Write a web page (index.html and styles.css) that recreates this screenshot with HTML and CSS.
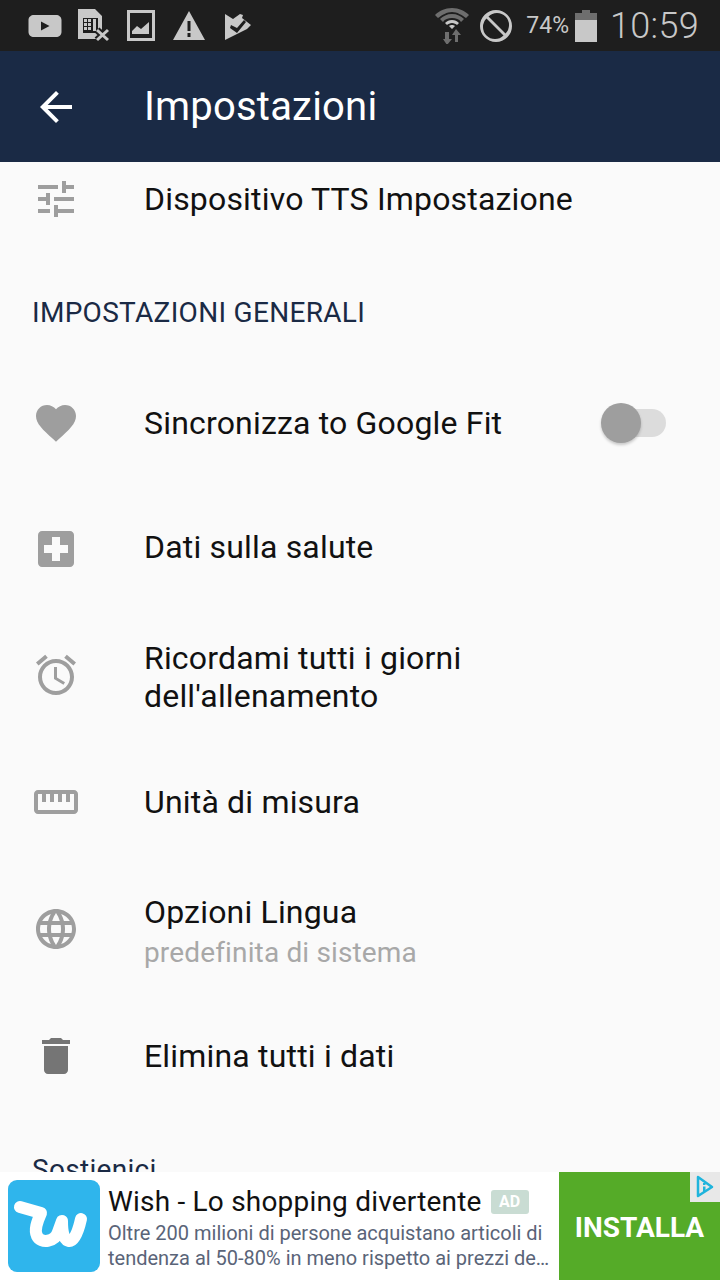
FILE: index.html
```html
<!DOCTYPE html>
<html lang="it">
<head>
    <meta charset="UTF-8">
    <meta name="viewport" content="width=device-width, initial-scale=1.0">
    <title>Impostazioni</title>
    <link rel="stylesheet" href="styles.css">
</head>
<body>
    <div class="screen">
        <div class="statusbar">
            <div class="status-left">
                <svg class="st-youtube" viewBox="0 0 34 24"><path fill-rule="evenodd" d="M6 1h22c3 0 5.500 2 5.500 5v12c0 3-2.500 5-5.500 5H6c-3 0-5.500-2-5.500-5V6C.5 3 3 1 6 1zm7 6.500v9l8.500-4.500z"/></svg>
                <svg class="st-sim" viewBox="0 0 32 33"><path fill-rule="evenodd" d="M0 0h17l7 7v23H0zM5 9v15h15V9z"/><path d="M6 10h3v3H6zm4 0h3v3h-3zm5 0h3v12h-3zM6 14h3v3H6zm4 0h3v3h-3zM6 18h3v3H6zm4 0h3v3h-3z"/><path class="cut" d="M19 21l11 10M30 21L19 31"/><path class="cross" d="M19 21l11 10M30 21L19 31"/></svg>
                <svg class="st-image" viewBox="0 0 28 31"><path fill-rule="evenodd" d="M0 0h28v31H0zM3 3v25h22V3z"/><path d="M5 24v-3l5-5 4 3 8-7v12z"/></svg>
                <svg class="st-warning" viewBox="0 0 32 30"><path fill-rule="evenodd" d="M16 0l16 29H0zM14.500 10v10h3V10zm0 12v4h3v-4z"/></svg>
                <svg class="st-check" viewBox="0 0 27 28"><path fill-rule="evenodd" d="M0 2l8 5 7-5 3 1-1 3 9 7-4 4-22 11zM6 13l-1 3 7 5 9-11-2-2-7 8z"/></svg>
            </div>
            <div class="status-right">
                <svg class="st-wifi" viewBox="0 0 34 36"><path class="dim" d="M17 0C10 0 4 3 0 7l3 3c4-3 9-6 14-6s10 3 14 6l3-3C30 3 24 0 17 0z"/><path class="dim" d="M17 6c-5 0-9 2-12 5l3 3c2-3 5-4 9-4s7 1 9 4l3-3c-3-3-7-5-12-5z"/><path d="M17 12c-3 0-5 1-7 3l2 2c1-1 3-2 5-2s4 1 5 2l2-2c-2-2-4-3-7-3zm0 5c-1 0-2 0-3 1l3 3 3-3c-1-1-2-1-3-1z"/><path class="dim" d="M10 24h4v7h3l-5 6-4-6h2zM21 21l5 6h-3v7h-3v-7h-3z"/></svg>
                <svg class="st-ban" viewBox="0 0 32 32"><path fill-rule="evenodd" d="M16 0a16 16 0 1 1 0 32a16 16 0 0 1 0-32zM6.500 8.500a12 12 0 0 0 17 17zM8.500 6.500l17 17a12 12 0 0 0-17-17z"/></svg>
                <span class="status-pct">74%</span>
                <svg class="st-battery" viewBox="0 0 22 32"><path class="dim" d="M7 0h8v3h7v7H0V3h7z"/><path d="M0 10h22v22H0z"/></svg>
                <span class="status-time">10:59</span>
            </div>
        </div>

        <header class="appbar">
            <svg class="back" viewBox="0 0 24 24"><path d="M20 11H7.830l5.590-5.590L12 4l-8 8 8 8 1.410-1.410L7.830 13H20v-2z"/></svg>
            <h1>Impostazioni</h1>
        </header>

        <main class="content">
            <div class="list">
                <div class="row">
                    <svg class="icon" viewBox="0 0 24 24"><path d="M3 17v2h6v-2H3zM3 5v2h10V5H3zm10 16v-2h8v-2h-8v-2h-2v6h2zM7 9v2H3v2h4v2h2V9H7zm14 4v-2H11v2h10zm-6-4h2V7h4V5h-4V3h-2v6z"/></svg>
                    <div class="row-text">Dispositivo TTS Impostazione</div>
                </div>

                <div class="section">IMPOSTAZIONI GENERALI</div>

                <div class="row">
                    <svg class="icon" viewBox="0 0 24 24"><path d="M12 21.350l-1.450-1.320C5.400 15.360 2 12.280 2 8.500 2 5.420 4.420 3 7.500 3c1.740 0 3.410.81 4.500 2.090C13.090 3.810 14.760 3 16.500 3 19.580 3 22 5.420 22 8.500c0 3.780-3.400 6.860-8.550 11.540L12 21.350z"/></svg>
                    <div class="row-text">Sincronizza to Google Fit</div>
                    <div class="switch"><div class="switch-thumb"></div></div>
                </div>
                <div class="row">
                    <svg class="icon icon-low" viewBox="0 0 24 24"><path d="M19 3H5c-1.100 0-1.990.9-1.990 2L3 19c0 1.100.9 2 2 2h14c1.100 0 2-.9 2-2V5c0-1.100-.9-2-2-2zm-1 11h-4v4h-4v-4H6v-4h4V6h4v4h4v4z"/></svg>
                    <div class="row-text">Dati sulla salute</div>
                </div>
                <div class="row row-tall">
                    <svg class="icon" viewBox="0 0 24 24"><path d="M22 5.720l-4.600-3.860-1.290 1.530 4.600 3.860L22 5.720zM7.880 3.390L6.600 1.860 2 5.710l1.290 1.530 4.590-3.850zM12.500 8H11v6l4.750 2.850.75-1.230-4-2.370V8zM12 4c-4.970 0-9 4.030-9 9s4.030 9 9 9 9-4.030 9-9-4.030-9-9-9zm0 16c-3.870 0-7-3.130-7-7s3.130-7 7-7 7 3.130 7 7-3.130 7-7 7z"/></svg>
                    <div class="row-text">Ricordami tutti i giorni<br>dell'allenamento</div>
                </div>
                <div class="row">
                    <svg class="icon" viewBox="0 0 24 24"><path d="M21 6H3c-1.100 0-2 .9-2 2v8c0 1.100.9 2 2 2h18c1.100 0 2-.9 2-2V8c0-1.100-.9-2-2-2zm0 10H3V8h2v4h2V8h2v4h2V8h2v4h2V8h2v4h2V8h2v8z"/></svg>
                    <div class="row-text">Unità di misura</div>
                </div>
                <div class="row row-lang">
                    <svg class="icon" viewBox="0 0 24 24"><path d="M11.990 2C6.470 2 2 6.480 2 12s4.470 10 9.990 10C17.520 22 22 17.520 22 12S17.520 2 11.990 2zm6.930 6h-2.950c-.32-1.250-.78-2.450-1.380-3.560 1.840.63 3.370 1.910 4.330 3.560zM12 4.040c.83 1.200 1.480 2.530 1.910 3.960h-3.820c.43-1.430 1.080-2.760 1.910-3.960zM4.260 14C4.100 13.360 4 12.690 4 12s.1-1.360.26-2h3.380c-.08.66-.14 1.320-.14 2 0 .68.06 1.340.14 2H4.260zm.82 2h2.950c.32 1.250.78 2.450 1.380 3.560-1.840-.63-3.370-1.900-4.330-3.560zm2.950-8H5.080c.96-1.660 2.490-2.930 4.330-3.560C8.810 5.550 8.350 6.750 8.030 8zM12 19.960c-.83-1.200-1.480-2.530-1.910-3.960h3.820c-.43 1.430-1.080 2.760-1.910 3.960zM14.340 14H9.660c-.09-.66-.16-1.320-.16-2 0-.68.07-1.350.16-2h4.680c.09.65.16 1.320.16 2 0 .68-.07 1.340-.16 2zm.25 5.560c.6-1.110 1.060-2.310 1.380-3.560h2.950c-.96 1.650-2.490 2.930-4.330 3.560zM16.360 14c.08-.66.14-1.320.14-2 0-.68-.06-1.340-.14-2h3.380c.16.64.26 1.310.26 2s-.1 1.360-.26 2h-3.380z"/></svg>
                    <div class="row-text">Opzioni Lingua<div class="row-sub">predefinita di sistema</div></div>
                </div>
                <div class="row">
                    <svg class="icon icon-dark" viewBox="0 0 24 24"><path d="M6 19c0 1.100.9 2 2 2h8c1.100 0 2-.9 2-2V7H6v12zM19 4h-3.500l-1-1h-5l-1 1H5v2h14V4z"/></svg>
                    <div class="row-text">Elimina tutti i dati</div>
                </div>

                <div class="section section-plain">Sostienici</div>
            </div>
        </main>

        <footer class="ad">
            <svg class="ad-logo" viewBox="0 0 92 92"><rect width="92" height="92" rx="9" fill="#2fb5ec"/><path d="M12 27L33 33C29 42 26 50 29 56C33 64 47 62 50 52L54 41C54 50 55 60 61 61C67 62 71 48 73 39" fill="none" stroke="#fff" stroke-width="12" stroke-linecap="round" stroke-linejoin="round"/></svg>
            <div class="ad-body">
                <div class="ad-title">Wish - Lo shopping divertente<span class="ad-badge">AD</span></div>
                <div class="ad-line">Oltre 200 milioni di persone acquistano articoli di</div>
                <div class="ad-line">tendenza al 50-80% in meno rispetto ai prezzi de…</div>
            </div>
            <div class="ad-cta">INSTALLA</div>
            <div class="adchoice">
                <svg viewBox="0 0 20 24"><path d="M3 2l14 10L3 21z" fill="none" stroke="#1fb4dc" stroke-width="2.500" stroke-linejoin="round"/><path d="M8 8h2.500v2H8zm0 3.500h2.500V17H8z" fill="#1fb4dc"/></svg>
            </div>
        </footer>
    </div>
</body>
</html>
```

FILE: styles.css
```css
:root {
    --bar: #1e1e1e;
    --status: #c8c8c8;
    --status-dim: #6e6e6e;
    --primary: #1a2a45;
    --background: #fafafa;
    --icon: #9e9e9e;
    --text: #111111;
}

html, body {
    margin: 0;
    height: 100%;
    overflow: hidden;
}

body {
    font-family: Roboto, sans-serif;
    color: var(--text);
    background: var(--background);
}

.screen {
    display: flex;
    flex-direction: column;
    height: 1280px;
}

/* status bar */
.statusbar {
    height: 51px;
    flex: none;
    background: var(--bar);
    display: flex;
    justify-content: space-between;
    align-items: center;
    padding: 0 21px 0 28px;
    color: var(--status);
}

.statusbar svg {
    display: block;
    fill: var(--status);
}

.statusbar .dim {
    fill: var(--status-dim);
}

.statusbar .cut {
    fill: none;
    stroke: var(--bar);
    stroke-width: 7;
}

.statusbar .cross {
    fill: none;
    stroke: var(--status);
    stroke-width: 3;
}

.status-left, .status-right {
    display: flex;
    align-items: center;
}

.st-youtube { width: 34px; height: 24px; margin-right: 16px; }
.st-sim { width: 32px; height: 33px; margin-right: 17px; }
.st-image { width: 28px; height: 31px; margin-right: 18px; }
.st-warning { width: 32px; height: 30px; margin-right: 20px; }
.st-check { width: 27px; height: 28px; }
.st-wifi { width: 34px; height: 36px; margin-right: 11px; }
.st-ban { width: 32px; height: 32px; margin-right: 14px; }
.st-battery { width: 22px; height: 32px; margin-left: 6px; margin-right: 13px; }

.status-pct {
    font-size: 23px;
}

.status-time {
    font-size: 36px;
    font-weight: 300;
    letter-spacing: 0.3px;
}

/* app bar */
.appbar {
    height: 111px;
    flex: none;
    background: var(--primary);
    display: flex;
    align-items: center;
    padding-left: 32px;
}

.back {
    width: 48px;
    height: 48px;
    fill: #ffffff;
    margin-right: 64px;
}

.appbar h1 {
    margin: 0;
    color: #ffffff;
    font-size: 40px;
    font-weight: 400;
    letter-spacing: 0.2px;
}

/* settings list */
.content {
    flex: 1;
    min-height: 0;
    overflow: hidden;
}

.list {
    margin-top: -25px;
}

.row {
    height: 124px;
    display: flex;
    align-items: center;
    padding: 0 54px 0 32px;
}

.row-tall {
    height: 131px;
}

.row-lang {
    height: 130px;
}

.icon {
    width: 48px;
    height: 48px;
    flex: none;
    fill: var(--icon);
    margin-right: 64px;
}

.icon-low {
    margin-top: 4px;
}

.icon-dark {
    fill: #757575;
}

.row-text {
    flex: 1;
    font-size: 32px;
    line-height: 38px;
    letter-spacing: 0.18px;
}

.row-tall .row-text {
    padding-top: 5px;
}

.row-lang .row-text {
    padding-top: 9px;
}

.row-sub {
    font-size: 28px;
    line-height: 44px;
    letter-spacing: 0.15px;
    color: #a8a8a8;
}

.section {
    height: 100px;
    display: flex;
    align-items: center;
    padding: 2px 0 0 32px;
    box-sizing: border-box;
    font-size: 28px;
    letter-spacing: 0.3px;
    color: var(--primary);
}

.switch {
    position: relative;
    width: 46px;
    height: 28px;
    border-radius: 14px;
    background: #dcdcdc;
}

.switch-thumb {
    position: absolute;
    left: -19px;
    top: -6px;
    width: 40px;
    height: 40px;
    border-radius: 50%;
    background: var(--icon);
    box-shadow: 0 2px 3px rgba(0, 0, 0, 0.2);
}

/* ad banner */
.ad {
    position: relative;
    height: 108px;
    flex: none;
    background: #ffffff;
    display: flex;
    align-items: center;
}

.ad-logo {
    width: 92px;
    height: 92px;
    flex: none;
    margin: 0 8px;
}

.ad-body {
    flex: 1;
    min-width: 0;
    padding-top: 2px;
}

.ad-title {
    display: flex;
    align-items: center;
    font-size: 28px;
    line-height: 36px;
    letter-spacing: 0.2px;
    margin-bottom: 1px;
    white-space: nowrap;
    color: #111111;
}

.ad-badge {
    margin-left: 9px;
    width: 38px;
    height: 24px;
    border-radius: 3px;
    background: #c9dcd3;
    color: #ffffff;
    font-size: 16px;
    font-weight: 700;
    line-height: 24px;
    letter-spacing: 0;
    text-align: center;
}

.ad-line {
    font-size: 20px;
    line-height: 25px;
    white-space: nowrap;
    color: #5a6478;
}

.ad-cta {
    width: 161px;
    height: 108px;
    flex: none;
    box-sizing: border-box;
    padding-top: 3px;
    background: #55ab28;
    color: #ffffff;
    font-size: 28px;
    font-weight: 700;
    display: flex;
    align-items: center;
    justify-content: center;
}

.adchoice {
    position: absolute;
    top: 0;
    right: 0;
    width: 30px;
    height: 30px;
    background: #e8e8e8;
    display: flex;
    align-items: center;
    justify-content: center;
}

.adchoice svg {
    width: 20px;
    height: 24px;
}
```
